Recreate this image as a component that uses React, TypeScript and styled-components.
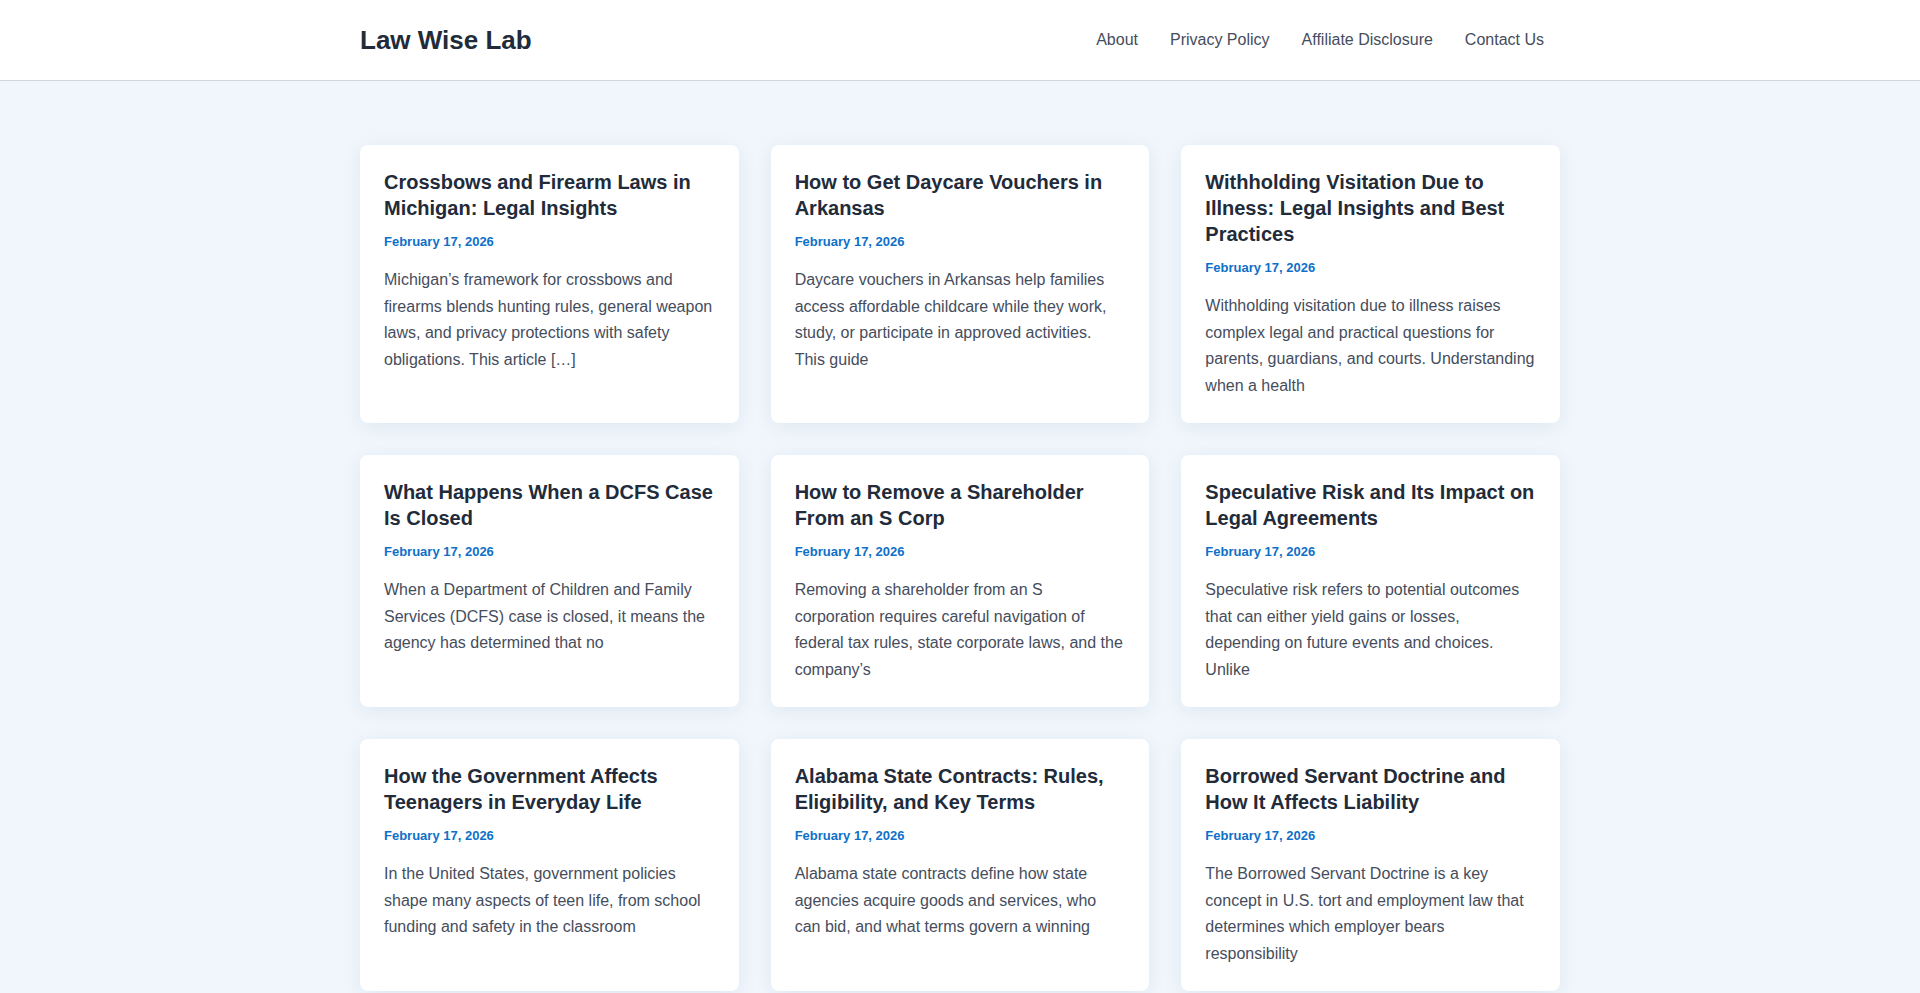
import React from "react";
import styled, { createGlobalStyle } from "styled-components";

const Global = createGlobalStyle`
  * { box-sizing: border-box; }
  html, body { margin: 0; padding: 0; }
  body {
    background: #f0f6fc;
    font-family: "Liberation Sans", Arial, sans-serif;
    color: #454d5d;
  }
`;

const Header = styled.header`
  background: #ffffff;
  border-bottom: 1px solid #d1d5db;
`;

const HeaderInner = styled.div`
  max-width: 1200px;
  height: 80px;
  margin: 0 auto;
  display: flex;
  align-items: center;
  justify-content: space-between;
`;

const Logo = styled.a`
  font-size: 26px;
  font-weight: 700;
  color: #222b3a;
  text-decoration: none;
`;

const Nav = styled.nav`
  display: flex;
  gap: 32px;
  padding-right: 16px;
`;

const NavLink = styled.a`
  font-size: 16px;
  color: #454d5d;
  text-decoration: none;
`;

const Main = styled.main`
  max-width: 1200px;
  margin: 0 auto;
  padding: 64px 0;
  display: grid;
  grid-template-columns: repeat(3, 1fr);
  gap: 32px;
`;

const Card = styled.article`
  background: #ffffff;
  border-radius: 8px;
  padding: 24px;
  box-shadow: 0 4px 20px rgba(20, 40, 70, 0.07);
`;

const Title = styled.h2`
  margin: 0 0 12px;
  font-size: 20px;
  line-height: 26px;
  font-weight: 700;
  color: #222b3a;
`;

const PostDate = styled.div`
  font-size: 13px;
  font-weight: 700;
  line-height: 17px;
  color: #0f70c8;
  margin-bottom: 17.4px;
`;

const Excerpt = styled.p`
  margin: 0;
  font-size: 16px;
  line-height: 26.4px;
  color: #454d5d;
`;

const links = ["About", "Privacy Policy", "Affiliate Disclosure", "Contact Us"];

const posts = [
  ["Crossbows and Firearm Laws in Michigan: Legal Insights", "Michigan’s framework for crossbows and firearms blends hunting rules, general weapon laws, and privacy protections with safety obligations. This article […]"],
  ["How to Get Daycare Vouchers in Arkansas", "Daycare vouchers in Arkansas help families access affordable childcare while they work, study, or participate in approved activities. This guide"],
  ["Withholding Visitation Due to Illness: Legal Insights and Best Practices", "Withholding visitation due to illness raises complex legal and practical questions for parents, guardians, and courts. Understanding when a health"],
  ["What Happens When a DCFS Case Is Closed", "When a Department of Children and Family Services (DCFS) case is closed, it means the agency has determined that no"],
  ["How to Remove a Shareholder From an S Corp", "Removing a shareholder from an S corporation requires careful navigation of federal tax rules, state corporate laws, and the company’s"],
  ["Speculative Risk and Its Impact on Legal Agreements", "Speculative risk refers to potential outcomes that can either yield gains or losses, depending on future events and choices. Unlike"],
  ["How the Government Affects Teenagers in Everyday Life", "In the United States, government policies shape many aspects of teen life, from school funding and safety in the classroom"],
  ["Alabama State Contracts: Rules, Eligibility, and Key Terms", "Alabama state contracts define how state agencies acquire goods and services, who can bid, and what terms govern a winning"],
  ["Borrowed Servant Doctrine and How It Affects Liability", "The Borrowed Servant Doctrine is a key concept in U.S. tort and employment law that determines which employer bears responsibility"],
];

export default function App() {
  return (
    <>
      <Global />
      <Header>
        <HeaderInner>
          <Logo href="#">Law Wise Lab</Logo>
          <Nav>
            {links.map((l) => (
              <NavLink key={l} href="#">{l}</NavLink>
            ))}
          </Nav>
        </HeaderInner>
      </Header>
      <Main>
        {posts.map(([t, e]) => (
          <Card key={t}>
            <Title>{t}</Title>
            <PostDate>February 17, 2026</PostDate>
            <Excerpt>{e}</Excerpt>
          </Card>
        ))}
      </Main>
    </>
  );
}
